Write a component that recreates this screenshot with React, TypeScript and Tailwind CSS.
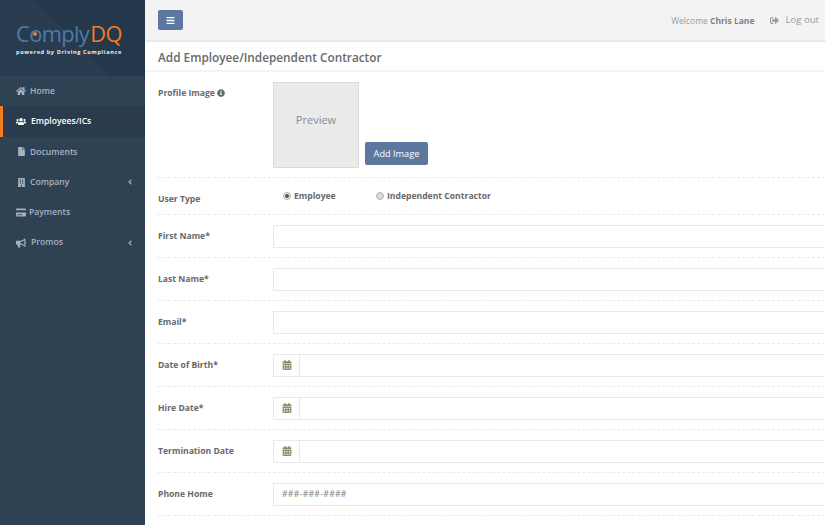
import { FaHome, FaUsers, FaFile, FaBuilding, FaCreditCard, FaBullhorn, FaCalendarAlt, FaSignOutAlt, FaInfoCircle, FaBars, FaAngleLeft } from "react-icons/fa";

const nav = [
  { label: "Home", Icon: FaHome, gap: "gap-[4px]", size: 10 },
  { label: "Employees/ICs", Icon: FaUsers, active: true, gap: "gap-[5px]", size: 11 },
  { label: "Documents", Icon: FaFile, gap: "gap-[4px]", size: 9 },
  { label: "Company", Icon: FaBuilding, arrow: true, gap: "gap-[4px]", size: 9 },
  { label: "Payments", Icon: FaCreditCard, gap: "gap-[3px]", size: 11 },
  { label: "Promos", Icon: FaBullhorn, arrow: true, gap: "gap-[5px]", size: 10 },
];

function Row({ label, h = "h-[43px]", labelClass = "pt-[1px]", children }: { label: string; h?: string; labelClass?: string; children?: React.ReactNode }) {
  return (
    <div className={`${h} flex items-center border-b border-dashed border-[#e7eaec]`}>
      <div className={`w-[115px] shrink-0 text-[8.6px] font-bold text-[#676a6c] ${labelClass}`}>{label}</div>
      {children}
    </div>
  );
}

const Input = ({ placeholder }: { placeholder?: string }) => (
  <div className="flex-1 h-[23px] border border-[#e9e9e9] bg-white -mr-[10px] flex items-center pl-[8px] pt-[1px] text-[8.7px] tracking-[0.25px] text-[#7d7f81]">{placeholder}</div>
);

const DateInput = () => (
  <div className="flex-1 flex h-[23px] -mr-[10px]">
    <div className="w-[27px] shrink-0 border border-[#e9e9e9] flex items-center justify-center text-[#8f8b70]"><FaCalendarAlt size={10} /></div>
    <div className="flex-1 border border-l-0 border-[#e9e9e9]" />
  </div>
);

export default function App() {
  return (
    <div className="w-[825px] h-[525px] overflow-hidden flex bg-white font-['Open_Sans',sans-serif] text-[#676a6c]">
      <aside className="w-[145px] shrink-0 bg-[#2f4254] flex flex-col">
        <div className="h-[76px] bg-[linear-gradient(45deg,#293c4f_50%,#25374a_50%)] flex flex-col pl-[16px] pt-[21px]">
          <div className="text-[21.8px] leading-[26px] tracking-[-0.6px] text-[#4d7ba8] font-normal flex items-center">
            <span>C</span>
            <span className="relative inline-flex items-center justify-center">
              <span>o</span>
              <span className="absolute w-[4px] h-[4px] rounded-full bg-[#f47c20]" />
            </span>
            <span>mply</span>
            <span className="text-[#f47c20] ml-[1px]">DQ</span>
          </div>
          <div className="text-[5.6px] leading-[8px] mt-[1px] font-bold text-[#e8edf1] tracking-[0.6px] whitespace-nowrap">powered by Driving Compliance</div>
        </div>
        <nav className="flex flex-col">
          {nav.map(({ label, Icon, active, arrow, gap, size }) => (
            <div
              key={label}
              className={`h-[30.3px] flex items-center pr-[11px] text-[8.6px] font-semibold ${gap} ${active ? "bg-[#293b4d] text-white border-l-[3px] border-[#f47c20] pl-[13px]" : "text-[#a7b1c2] pl-[16px]"}`}
            >
              <span className="w-[10px] flex justify-center shrink-0"><Icon size={size} /></span>
              <span className="flex-1 pt-[0.5px]">{label}</span>
              {arrow && <FaAngleLeft size={8} />}
            </div>
          ))}
        </nav>
      </aside>
      <main className="flex-1 min-w-0 flex flex-col">
        <header className="h-[42px] shrink-0 bg-[#f3f3f4] border-b-2 border-[#e7eaec] flex items-center pl-[13px] pr-[6px]">
          <button className="w-[25px] h-[20px] rounded-[2px] bg-[#5c77a0] text-white flex items-center justify-center"><FaBars size={9} /></button>
          <div className="ml-auto flex items-center text-[8.5px] text-[#999c9e]">
            <span className="pt-[2px]">Welcome <b className="text-[#7f8284]">Chris Lane</b></span>
            <FaSignOutAlt size={9} className="ml-[16px] mr-[6px]" />
            <span className="text-[9.6px]">Log out</span>
          </div>
        </header>
        <div className="h-[30px] shrink-0 flex items-center pl-[13px] pt-[3px] border-b-2 border-[#f3f3f4] text-[11.8px] font-semibold text-[#676a6c]">
          Add Employee/Independent Contractor
        </div>
        <div className="pl-[13px] flex flex-col">
          <div className="h-[106px] flex items-start pt-[10px] border-b border-dashed border-[#e7eaec]">
            <div className="w-[115px] shrink-0 text-[8.6px] font-bold text-[#676a6c] mt-[5px] flex items-center gap-[2px]">Profile Image <FaInfoCircle size={8} /></div>
            <div className="w-[86px] h-[86px] bg-[#ebebeb] border border-[#d9d9d9] flex items-center justify-center pb-[9px] text-[11px] text-[#8a8c8e]">Preview</div>
            <button className="ml-[6px] mt-[60px] w-[63px] h-[23px] rounded-[2px] bg-[#5c77a0] text-white text-[9.2px]">Add Image</button>
          </div>
          <Row label="User Type" h="h-[37px]" labelClass="mt-[7px]">
            <div className="flex items-center text-[8.6px] font-bold text-[#676a6c] mt-[1px] pl-[10px]">
              <span className="w-[8px] h-[8px] rounded-full bg-[#e8e8e8] border border-[#b5b5b5] flex items-center justify-center mr-[3px]"><span className="w-[4px] h-[4px] rounded-full bg-[#555]" /></span>
              <span className="w-[82px]">Employee</span>
              <span className="w-[8px] h-[8px] rounded-full bg-[#dcdcdc] border border-[#b5b5b5] mr-[3px]" />
              <span>Independent Contractor</span>
            </div>
          </Row>
          <Row label="First Name*"><Input /></Row>
          <Row label="Last Name*"><Input /></Row>
          <Row label="Email*"><Input /></Row>
          <Row label="Date of Birth*"><DateInput /></Row>
          <Row label="Hire Date*"><DateInput /></Row>
          <Row label="Termination Date"><DateInput /></Row>
          <Row label="Phone Home"><Input placeholder="###-###-####" /></Row>
        </div>
      </main>
    </div>
  );
}
